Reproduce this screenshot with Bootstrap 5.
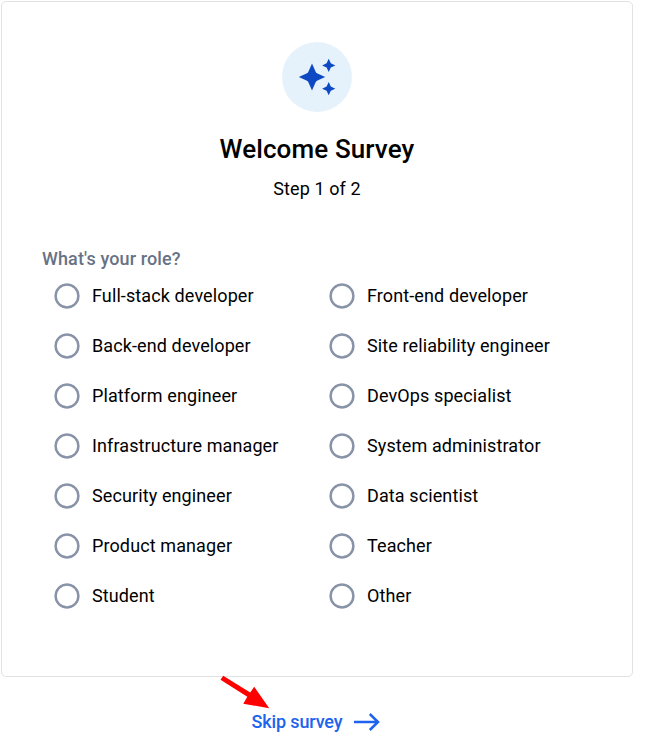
<!DOCTYPE html>
<html lang="en">
<head>
<meta charset="utf-8">
<meta name="viewport" content="width=device-width, initial-scale=1">
<title>Welcome Survey</title>
<link href="https://cdn.jsdelivr.net/npm/bootstrap@5.3.0/dist/css/bootstrap.min.css" rel="stylesheet">
<style>
body{font-family:Roboto,sans-serif;color:#000;height:754px;overflow:hidden}
.survey{width:632px;height:676px;margin:1px 0 0 1px;border:1px solid #e1e2e6;border-radius:5px;padding:40px}
.spark{width:70px;height:70px;background:#e5f2fc}
.survey h1{font-size:26px;font-weight:500;line-height:32px;letter-spacing:.12px;margin:21px 0 0}
.step{font-size:18px;line-height:24px;margin:12px 0 0;letter-spacing:.1px}
.question{font-size:18px;font-weight:500;line-height:24px;letter-spacing:.12px;color:#677285;margin:46px 0 0}
.roles{margin-top:-1px}
.role{width:275px;height:50px;padding-left:12px;font-size:18px;letter-spacing:.11px}
.role .form-check-input{width:26px;height:26px;margin:2px 12px 0 0;border:0;background:url("data:image/svg+xml,%3Csvg xmlns='http://www.w3.org/2000/svg' viewBox='0 0 26 26'%3E%3Ccircle cx='13' cy='13' r='11.4' fill='white' stroke='%238993a8' stroke-width='2.5'/%3E%3C/svg%3E") center/26px no-repeat}
.role .form-check-input:checked{background-color:#1d63ed}
.skip-row{width:632px;margin-top:33px}
.skip{font-size:18px;font-weight:500;line-height:24px;letter-spacing:-.14px;color:#1d63ed;gap:12px}
.pointer{left:216px;top:672px}
</style>
</head>
<body class="bg-white position-relative">
<main class="card survey">
<header class="d-flex flex-column align-items-center">
<div class="spark rounded-circle">
<svg class="d-block" width="70" height="70" viewBox="0 0 70 70" fill="#0c49c2"><path d="M30 21.500L33.500 29.500Q34 31 35.500 31.500L43.200 35L35.500 38.500Q34 39 33.500 40.500L30 48.500L26.500 40.500Q26 39 24.500 38.500L16.800 35L24.500 31.500Q26 31 26.500 29.500Z"/><path id="twinkle" d="M46.700 16.800L48.800 21.300L53.300 23.400L48.800 25.500L46.700 30L44.600 25.500L40.100 23.400L44.600 21.300Z"/><use href="#twinkle" y="23.300"/></svg>
</div>
<h1>Welcome Survey</h1>
<p class="step">Step 1 of 2</p>
</header>
<p class="question">What's your role?</p>
<div class="roles d-flex flex-wrap">
<label class="role d-flex align-items-center"><input class="form-check-input" type="radio" name="role">Full-stack developer</label>
<label class="role d-flex align-items-center"><input class="form-check-input" type="radio" name="role">Front-end developer</label>
<label class="role d-flex align-items-center"><input class="form-check-input" type="radio" name="role">Back-end developer</label>
<label class="role d-flex align-items-center"><input class="form-check-input" type="radio" name="role">Site reliability engineer</label>
<label class="role d-flex align-items-center"><input class="form-check-input" type="radio" name="role">Platform engineer</label>
<label class="role d-flex align-items-center"><input class="form-check-input" type="radio" name="role">DevOps specialist</label>
<label class="role d-flex align-items-center"><input class="form-check-input" type="radio" name="role">Infrastructure manager</label>
<label class="role d-flex align-items-center"><input class="form-check-input" type="radio" name="role">System administrator</label>
<label class="role d-flex align-items-center"><input class="form-check-input" type="radio" name="role">Security engineer</label>
<label class="role d-flex align-items-center"><input class="form-check-input" type="radio" name="role">Data scientist</label>
<label class="role d-flex align-items-center"><input class="form-check-input" type="radio" name="role">Product manager</label>
<label class="role d-flex align-items-center"><input class="form-check-input" type="radio" name="role">Teacher</label>
<label class="role d-flex align-items-center"><input class="form-check-input" type="radio" name="role">Student</label>
<label class="role d-flex align-items-center"><input class="form-check-input" type="radio" name="role">Other</label>
</div>
</main>
<div class="skip-row d-flex justify-content-center">
<a href="#" class="skip d-flex align-items-center text-decoration-none">Skip survey
<svg width="26" height="20" viewBox="0 0 26 20" fill="none" stroke="currentColor" stroke-width="2.500"><path d="M0 10H24M15.800 2L24 10L15.800 18"/></svg></a>
</div>
<svg class="pointer position-absolute" width="56" height="40" viewBox="0 0 56 40" fill="#f00"><path d="M7.200 3.700L34.200 20.500L38.200 14.800L53.200 36.300L27.300 31.700L31.300 24.800L4.500 7.800Z"/></svg>
</body>
</html>
